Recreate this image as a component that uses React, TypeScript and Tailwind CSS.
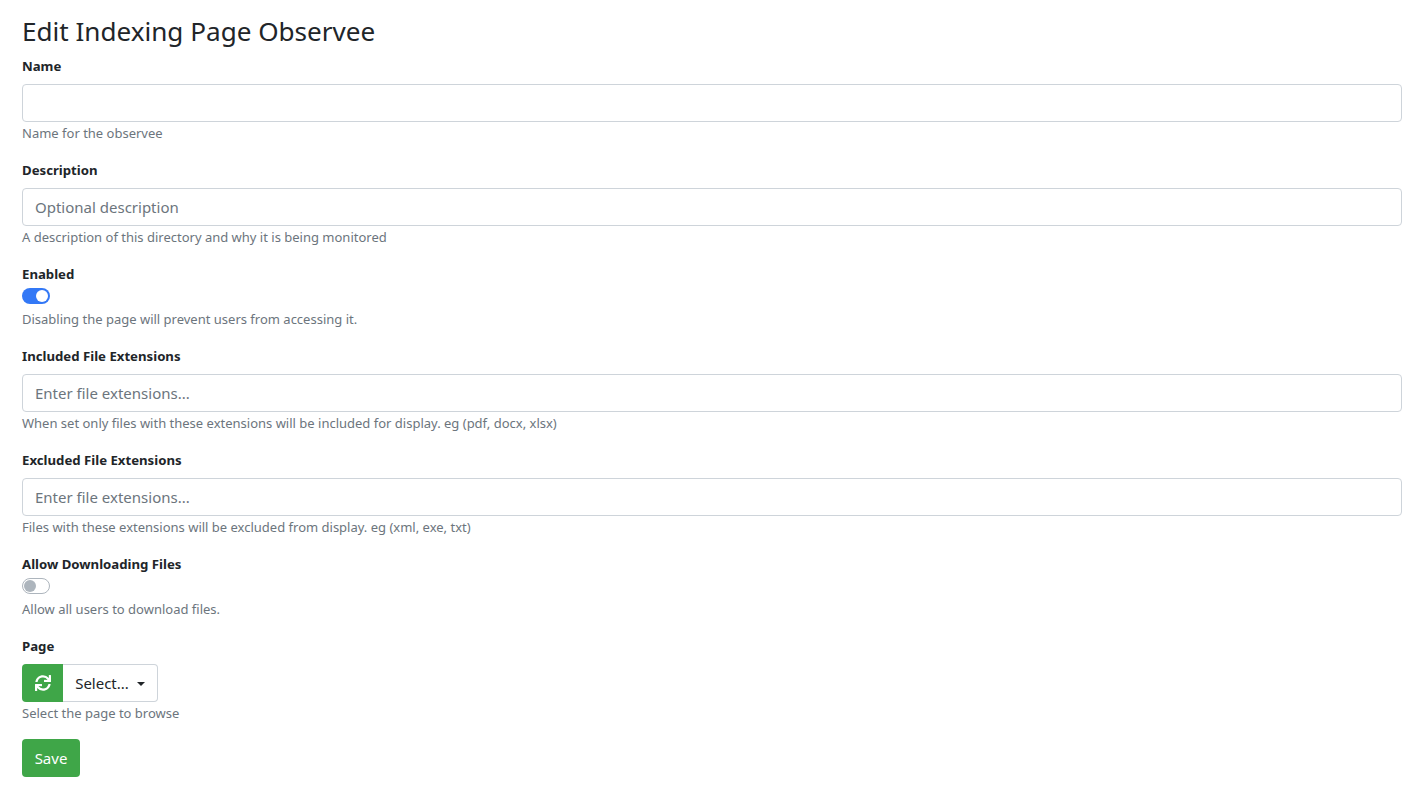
import { FaSync } from 'react-icons/fa'

const Label = ({ children }: { children: string }) => (
  <label className="block h-[21px] text-[13.2px] leading-[21px] font-bold text-[#212529]">{children}</label>
)

const Help = ({ children }: { children: string }) => (
  <small className="block h-[19px] text-[13px] leading-[19px] text-[#6c757d]">{children}</small>
)

const TextField = ({ label, placeholder, help }: { label: string; placeholder?: string; help: string }) => (
  <div className="mb-[17px]">
    <Label>{label}</Label>
    <input
      type="text"
      placeholder={placeholder}
      className="mt-[7px] block h-[38px] w-full rounded border border-[#ced4da] bg-white px-3 text-[15px] text-[#495057] placeholder:text-[#6c757d]"
    />
    <div className="mt-[2px]">
      <Help>{help}</Help>
    </div>
  </div>
)

const Toggle = ({ label, help, on }: { label: string; help: string; on?: boolean }) => (
  <div className="mb-[17px]">
    <Label>{label}</Label>
    <div
      className={
        on
          ? 'mt-[3px] flex h-4 w-7 items-center justify-end rounded-full bg-[#3378f6] px-[2px]'
          : 'mt-[3px] flex h-4 w-7 items-center justify-start rounded-full border border-[#adb5bd] bg-white px-[1px]'
      }
    >
      <span className={on ? 'h-3 w-3 rounded-full bg-white' : 'h-3 w-3 rounded-full bg-[#adb5bd]'} />
    </div>
    <div className="mt-[6px]">
      <Help>{help}</Help>
    </div>
  </div>
)

export default function App() {
  return (
    <div className="min-h-screen bg-white pt-[8px] pr-[15px] pl-[22px] font-['Noto_Sans','Open_Sans',sans-serif] text-[#212529]">
      <h1 className="h-[47.5px] text-[26.1px] leading-[47px] font-normal">Edit Indexing Page Observee</h1>
      <form>
        <TextField label="Name" help="Name for the observee" />
        <TextField label="Description" placeholder="Optional description" help="A description of this directory and why it is being monitored" />
        <Toggle label="Enabled" help="Disabling the page will prevent users from accessing it." on />
        <TextField
          label="Included File Extensions"
          placeholder="Enter file extensions..."
          help="When set only files with these extensions will be included for display. eg (pdf, docx, xlsx)"
        />
        <TextField
          label="Excluded File Extensions"
          placeholder="Enter file extensions..."
          help="Files with these extensions will be excluded from display. eg (xml, exe, txt)"
        />
        <Toggle label="Allow Downloading Files" help="Allow all users to download files." />
        <div className="mb-[16px]">
          <Label>Page</Label>
          <div className="mt-[7px] flex h-[38px]">
            <button type="button" className="flex w-[41px] items-center justify-center rounded-l bg-[#3fa648] text-white">
              <FaSync className="h-4 w-4" />
            </button>
            <button
              type="button"
              className="flex w-[95px] items-center justify-center gap-2 rounded-r border border-l-0 border-[#ced4da] bg-white pt-[2px] text-[15px] text-[#212529]"
            >
              Select...
              <span className="h-0 w-0 border-x-[4.5px] border-t-[4.5px] border-x-transparent border-t-[#212529]" />
            </button>
          </div>
          <div className="mt-[2px]">
            <Help>Select the page to browse</Help>
          </div>
        </div>
        <button type="submit" className="h-[38px] w-[58px] rounded bg-[#3fa648] pt-[2px] text-[15px] text-white">
          Save
        </button>
      </form>
    </div>
  )
}
